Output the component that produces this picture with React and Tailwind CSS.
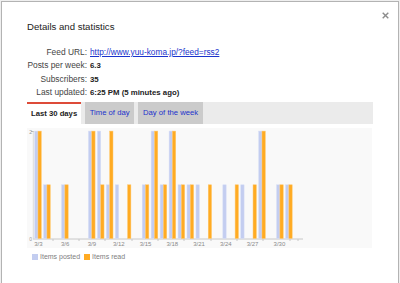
import React from "react";

const posted = [2, 1, 0, 1, 0, 0, 2, 2, 1, 1, 0, 0, 1, 2, 1, 2, 1, 1, 1, 0, 0, 1, 0, 1, 0, 2, 0, 1, 1, 0];
const read = [2, 1, 0, 1, 0, 0, 2, 1, 2, 0, 1, 0, 1, 2, 1, 2, 1, 1, 0, 1, 0, 0, 1, 0, 1, 2, 0, 1, 1, 0];
const labels = ["3/3", "3/6", "3/9", "3/12", "3/15", "3/18", "3/21", "3/24", "3/27", "3/30"];

const BASE = 110.5;
const UNIT = 53.7;
const STEP = 8.96;

function Chart() {
  return (
    <svg width="345" height="120" className="block bg-[#f9f9f9]">
      {/* axes */}
      <line x1="6.3" y1="3" x2="6.3" y2={BASE} stroke="#dddddd" strokeWidth="1" />
      <line x1="6" y1={BASE + 0.5} x2="276" y2={BASE + 0.5} stroke="#c8c8c8" strokeWidth="1" />
      <line x1="4" y1="3.5" x2="6.5" y2="3.5" stroke="#bbbbbb" strokeWidth="1" />
      {[26, 52, 78, 105, 131, 157, 184, 210, 236, 263, 271].map((x) => (
        <line key={x} x1={x} y1={BASE + 0.5} x2={x} y2={BASE + 2.5} stroke="#c8c8c8" strokeWidth="1" />
      ))}
      <text x="5" y="5.5" fontSize="5" fill="#999999" textAnchor="end" fontFamily="Liberation Sans, Arial, sans-serif">2</text>
      <text x="5" y="112.5" fontSize="5" fill="#999999" textAnchor="end" fontFamily="Liberation Sans, Arial, sans-serif">0</text>

      {/* bars */}
      {posted.map((v, i) => {
        const x = 7.7 + i * STEP;
        return (
          <g key={i}>
            {v > 0 && (
              <rect x={x} y={BASE - v * UNIT} width="3.3" height={v * UNIT} fill="#c3cdf0" stroke="#d6ddf6" strokeWidth="0.5" />
            )}
            {read[i] > 0 && (
              <rect x={x + 3.3} y={BASE - read[i] * UNIT} width="3.3" height={read[i] * UNIT} fill="#ffab23" stroke="#ffc76a" strokeWidth="0.5" />
            )}
          </g>
        );
      })}

      {/* x labels */}
      {labels.map((l, k) => (
        <text
          key={l}
          x={11.4 + k * 3 * STEP - k * 0.1}
          y="117.5"
          fontSize="6"
          fill="#8a8a8a"
          textAnchor="middle"
          fontFamily="Liberation Sans, Arial, sans-serif"
        >
          {l}
        </text>
      ))}
    </svg>
  );
}

function App() {
  const rows = [
    {
      label: "Feed URL:",
      value: (
        <a href="#" className="text-[#1a33cc] underline text-[8.3px]">
          http://www.yuu-koma.jp/?feed=rss2
        </a>
      ),
    },
    { label: "Posts per week:", value: "6.3" },
    { label: "Subscribers:", value: "35" },
    { label: "Last updated:", value: "6:25 PM (5 minutes ago)" },
  ];

  return (
    <div className="h-[283px] w-[400px] overflow-hidden bg-[#efefef] pl-[1px] pt-[1px] font-['Liberation_Sans',Arial,sans-serif]">
      <div className="relative h-[300px] w-[398px] border border-[#b3b3b3] bg-white px-[25px] pt-[19px]">
        {/* close */}
        <svg className="absolute right-[9px] top-[10px]" width="7" height="7" viewBox="0 0 7 7">
          <path d="M0.7 0.7 L6.3 6.3 M6.3 0.7 L0.7 6.3" stroke="#8c8c8c" strokeWidth="1.4" />
        </svg>

        <h1 className="text-[9.6px] leading-[12px] text-[#222222]">Details and statistics</h1>

        <div className="mt-[13px] flex flex-col">
          {rows.map((r) => (
            <div key={r.label} className="flex h-[13.3px] items-center gap-[3px] leading-[13.3px]">
              <span className="w-[60px] text-right text-[8.4px] text-[#444444]">{r.label}</span>
              {typeof r.value === "string" ? (
                <span className="text-[7.8px] font-bold text-[#222222]">{r.value}</span>
              ) : (
                r.value
              )}
            </div>
          ))}
        </div>

        {/* tabs */}
        <div className="mt-[3px] flex h-[22px] gap-[4px] bg-[#ebebeb] text-[7.7px]">
          <div className="flex items-center border-t-2 border-[#dd4b39] bg-white px-[4px] font-bold text-[#222222]">
            Last 30 days
          </div>
          <div className="flex items-center bg-[#cbcbcb] px-[4.5px] text-[#2233cc]">Time of day</div>
          <div className="flex items-center bg-[#cbcbcb] px-[5px] text-[#2233cc]">Day of the week</div>
        </div>

        <div className="mt-[4px]">
          <Chart />
        </div>

        {/* legend */}
        <div className="mt-[3px] flex h-[12px] items-center pl-[5px] text-[7px] text-[#808080]">
          <span className="h-[6px] w-[6px] bg-[#c3cdf0]" />
          <span className="ml-[2px] mr-[4px]">Items posted</span>
          <span className="h-[6px] w-[6px] bg-[#ffab23]" />
          <span className="ml-[2px]">Items read</span>
        </div>
      </div>
    </div>
  );
}

export default App;
